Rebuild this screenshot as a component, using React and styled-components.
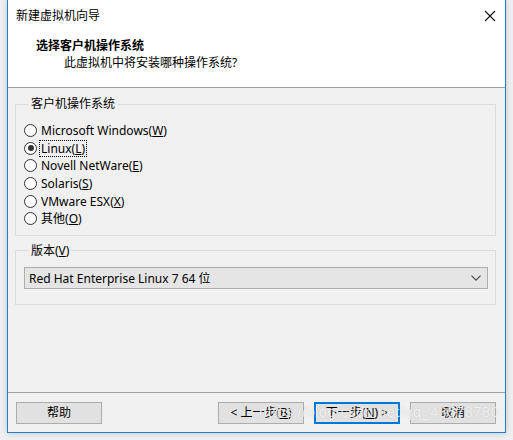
import React, { useState } from 'react';
import styled, { createGlobalStyle } from 'styled-components';

const GlobalStyle = createGlobalStyle`
  html, body {
    margin: 0;
    background: #f2f2f2;
  }
  body {
    font-family: "Segoe UI", "Noto Sans", "Noto Sans CJK SC", sans-serif;
    font-size: 12px;
    color: #000;
  }
`;

const systems = [
  { label: 'Microsoft Windows', key: 'W' },
  { label: 'Linux', key: 'L' },
  { label: 'Novell NetWare', key: 'E' },
  { label: 'Solaris', key: 'S' },
  { label: 'VMware ESX', key: 'X' },
  { label: '其他', key: 'O' },
];

export default function App() {
  const [selected, setSelected] = useState('L');

  return (
    <>
      <GlobalStyle />
      <Desktop>
        <Window>
          <TitleBar>
            <span>新建虚拟机向导</span>
            <CloseBtn type="button">
              <svg width="12" height="12" viewBox="0 0 12 12">
                <path d="M1 1 L11 11 M11 1 L1 11" stroke="#111" strokeWidth="1.1" />
              </svg>
            </CloseBtn>
          </TitleBar>

          <Header>
            <h1>选择客户机操作系统</h1>
            <p>此虚拟机中将安装哪种操作系统?</p>
          </Header>

          <Body>
            <Group>
              <legend>客户机操作系统</legend>
              <RadioList>
                {systems.map((s) => (
                  <RadioRow key={s.key} onClick={() => setSelected(s.key)}>
                    <RadioDot $checked={selected === s.key} />
                    <RadioText $focused={selected === s.key}>
                      {s.label}(<u>{s.key}</u>)
                    </RadioText>
                  </RadioRow>
                ))}
              </RadioList>
            </Group>

            <Group $compact>
              <legend>
                版本(<u>V</u>)
              </legend>
              <Combo>
                <span>Red Hat Enterprise Linux 7 64 位</span>
                <svg width="10" height="6" viewBox="0 0 10 6">
                  <path d="M0.5 0.6 L5 5.1 L9.5 0.6" fill="none" stroke="#444" strokeWidth="1.1" />
                </svg>
              </Combo>
            </Group>
          </Body>

          <Footer>
            <Button type="button">帮助</Button>
            <Spacer />
            <Button type="button">&lt; 上一步(<u>B</u>)</Button>
            <Button type="button" $primary>
              下一步(<u>N</u>) &gt;
            </Button>
            <Button type="button">取消</Button>
            <Watermark>https://blog.csdn.net/qq_43578780</Watermark>
          </Footer>
        </Window>
      </Desktop>
    </>
  );
}

const Desktop = styled.div`
  width: 513px;
  height: 440px;
  overflow: hidden;
  background: #efefef;
`;

const Window = styled.div`
  margin: -1px 0 0 7px;
  width: 497px;
  height: 432px;
  border: 1px solid #1c7fd6;
  background: #f0f0f0;
  display: flex;
  flex-direction: column;
  box-shadow: 0 0 6px rgba(0, 0, 0, 0.18);
`;

const TitleBar = styled.div`
  height: 31px;
  background: #fff;
  display: flex;
  align-items: center;
  justify-content: space-between;
  padding: 0 9px 0 8px;
  span {
    padding-bottom: 1px;
  }
`;

const CloseBtn = styled.button`
  border: none;
  background: transparent;
  padding: 0;
  width: 12px;
  height: 12px;
  display: flex;
`;

const Header = styled.div`
  height: 57px;
  background: #fff;
  border-bottom: 1px solid #a0a0a0;
  padding: 7px 0 0 28px;
  box-sizing: border-box;
  h1 {
    margin: 0;
    font-size: 12px;
    font-weight: bold;
    line-height: 16px;
  }
  p {
    margin: 1px 0 0 28px;
    line-height: 16px;
  }
`;

const Body = styled.div`
  flex: 1;
  padding: 8px 9px 0 7px;
  display: flex;
  flex-direction: column;
  gap: 7px;
`;

const Group = styled.fieldset`
  margin: 0;
  border: 1px solid #dcdcdc;
  padding: ${(p) => (p.$compact ? '8px 7px 15px 8px' : '10px 8px 7px 8px')};
  legend {
    padding: 0 2px;
    margin-left: 5px;
    line-height: 16px;
  }
`;

const RadioList = styled.div`
  display: flex;
  flex-direction: column;
`;

const RadioRow = styled.label`
  display: flex;
  align-items: center;
  height: 17.6px;
  gap: 3px;
  cursor: default;
`;

const RadioDot = styled.span`
  width: 11px;
  height: 11px;
  border: 1px solid #333;
  border-radius: 50%;
  background: #fff;
  position: relative;
  flex: none;
  &::after {
    content: '';
    display: ${(p) => (p.$checked ? 'block' : 'none')};
    position: absolute;
    left: 2.5px;
    top: 2.5px;
    width: 6px;
    height: 6px;
    border-radius: 50%;
    background: #333;
  }
`;

const RadioText = styled.span`
  line-height: 15px;
  padding: 0 1px;
  outline: ${(p) => (p.$focused ? '1px dotted #000' : 'none')};
`;

const Combo = styled.div`
  height: 20px;
  border: 1px solid #adadad;
  background: #e5e5e5;
  display: flex;
  align-items: center;
  justify-content: space-between;
  padding: 0 6px 0 4px;
`;

const Footer = styled.div`
  position: relative;
  height: 40px;
  border-top: 1px solid #a0a0a0;
  display: flex;
  align-items: flex-start;
  padding: 9px 9px 0 8px;
  gap: 10px;
  box-sizing: border-box;
`;

const Spacer = styled.div`
  flex: 1;
`;

const Button = styled.button`
  width: 86px;
  height: 22px;
  box-sizing: border-box;
  background: #e1e1e1;
  border: ${(p) => (p.$primary ? '2px solid #0078d7' : '1px solid #adadad')};
  font: inherit;
  color: #000;
  padding: 0;
  line-height: 18px;
`;

const Watermark = styled.span`
  position: absolute;
  left: 251px;
  top: 10px;
  font-family: "Liberation Sans", sans-serif;
  font-size: 15px;
  letter-spacing: 0.3px;
  color: rgba(255, 255, 255, 0.75);
  text-shadow: 0 0 1px rgba(120, 120, 120, 0.35);
  pointer-events: none;
`;
